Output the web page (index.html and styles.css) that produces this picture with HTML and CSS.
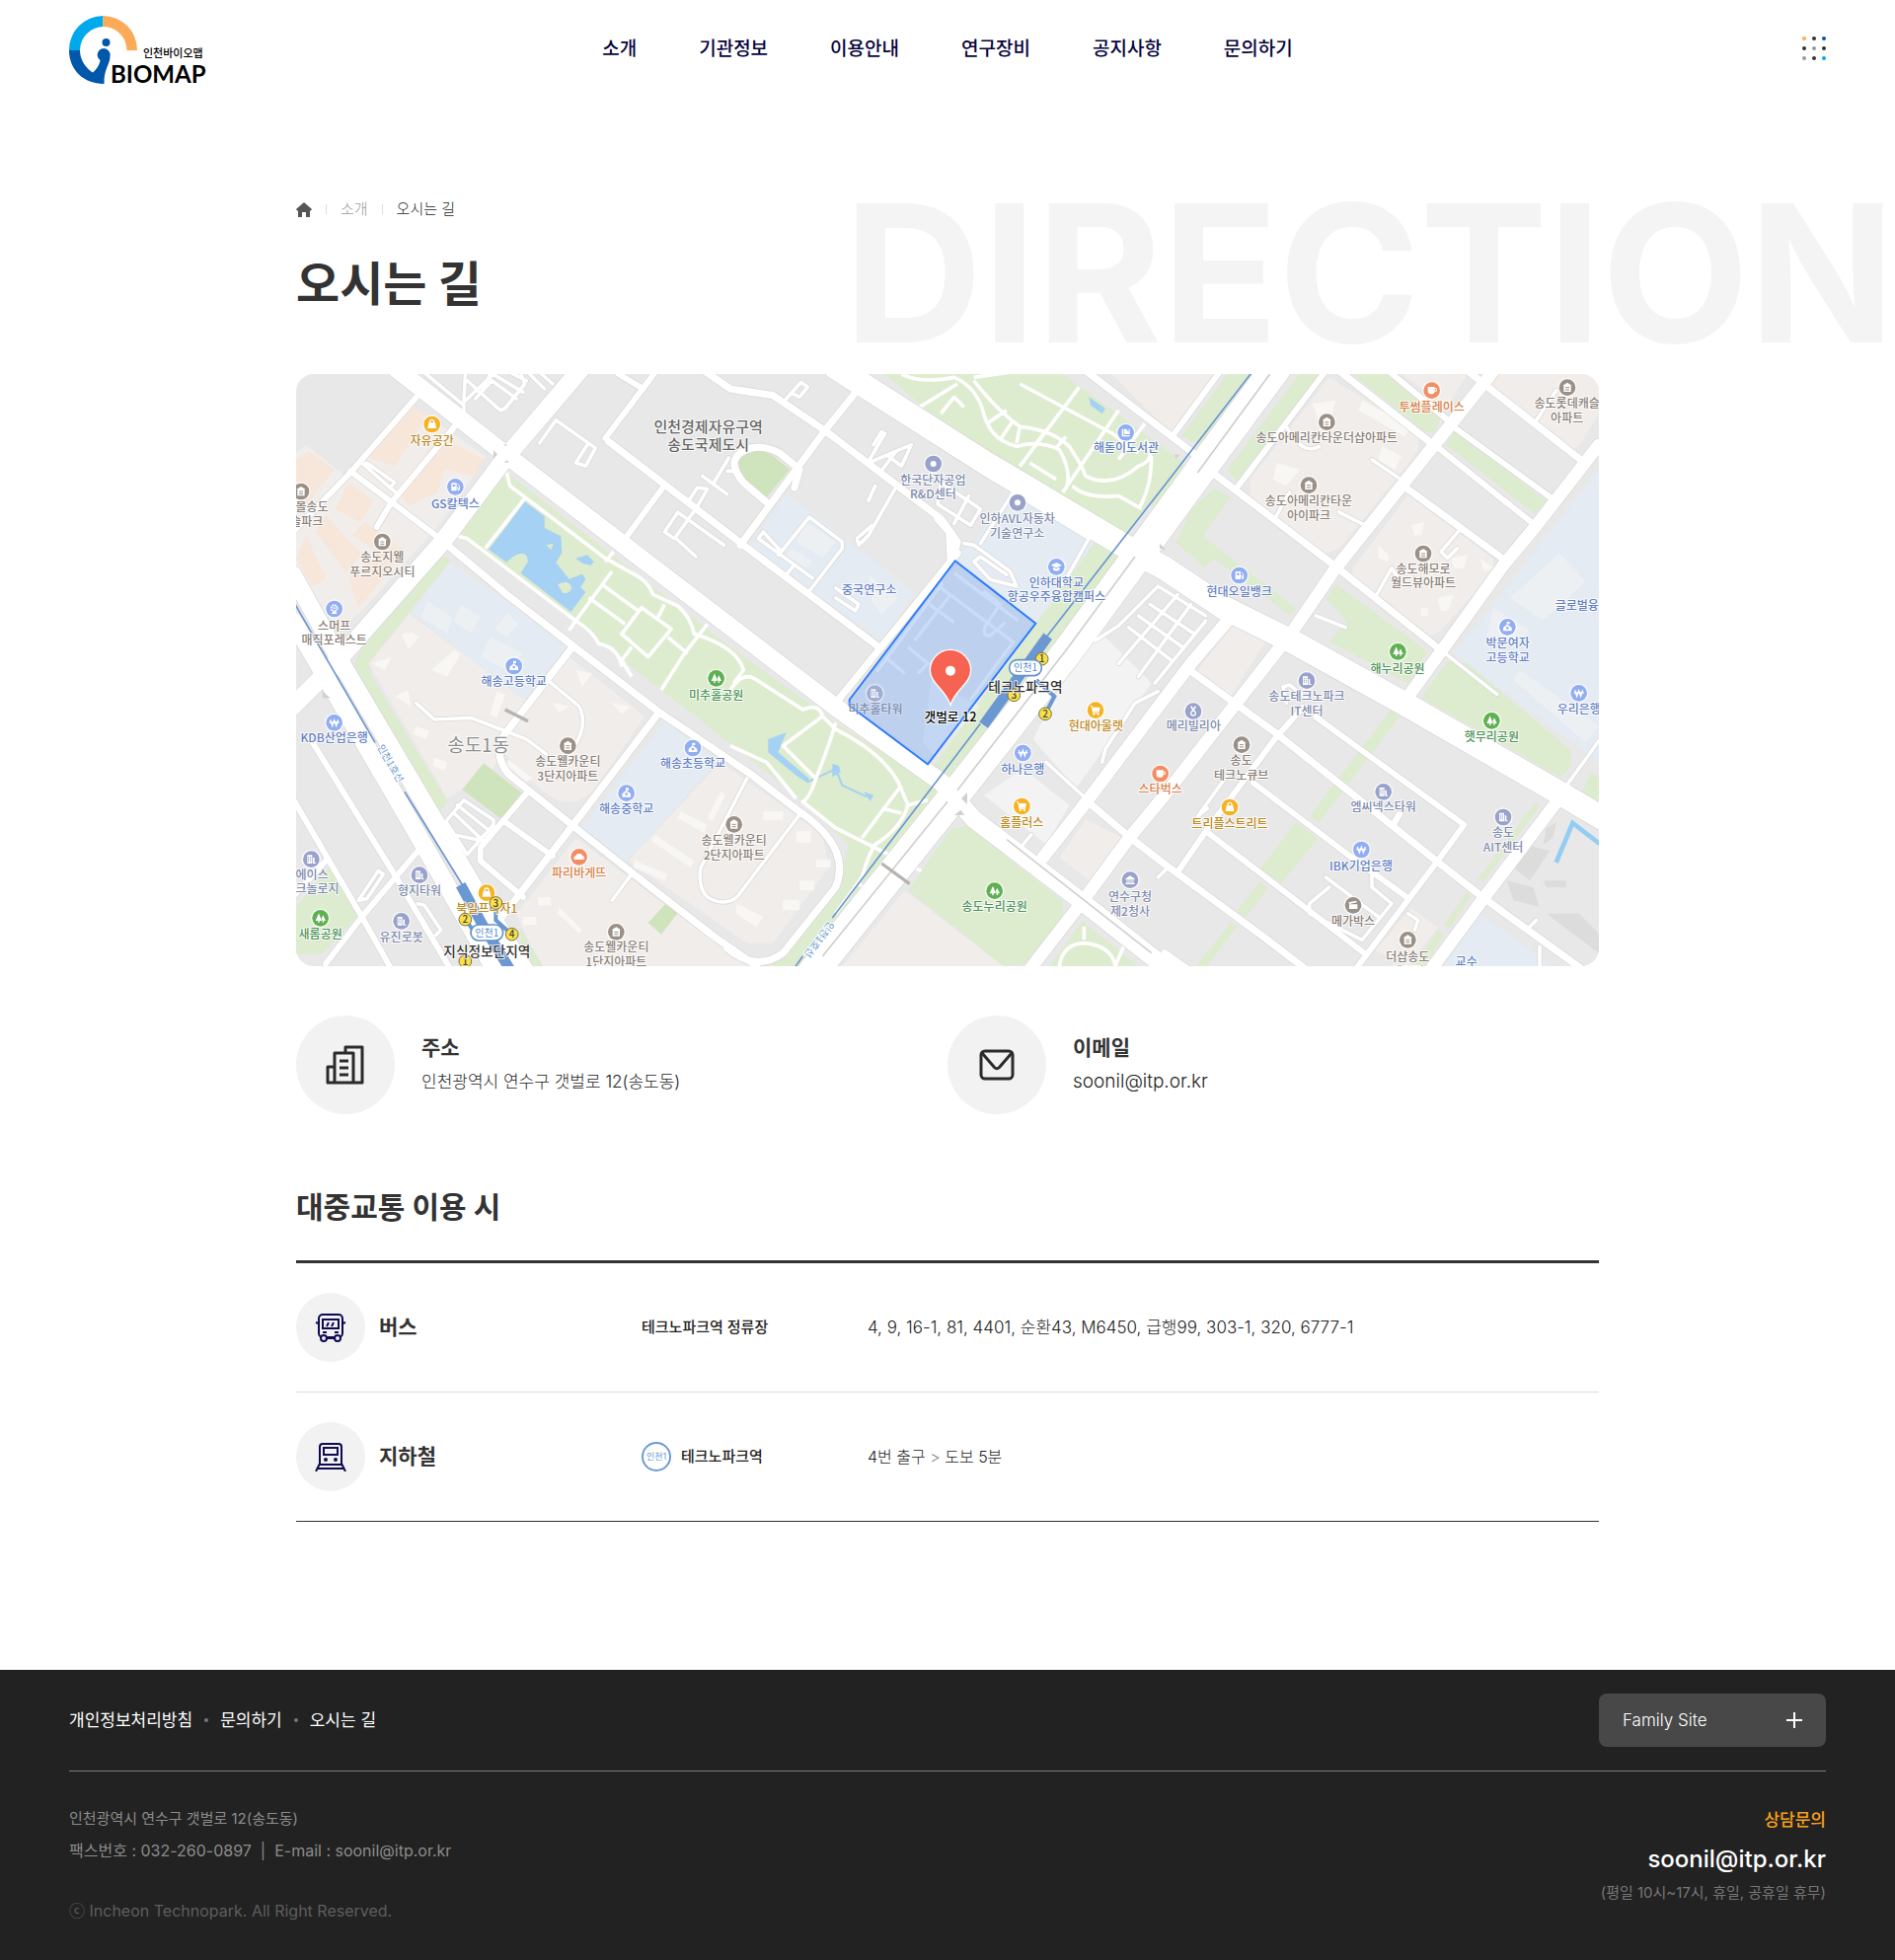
FILE: index.html
```html
<!DOCTYPE html>
<html lang="ko">
<head>
<meta charset="utf-8">
<meta name="viewport" content="width=device-width, initial-scale=1">
<title>오시는 길 | 인천바이오맵</title>
<link rel="stylesheet" href="styles.css">
</head>
<body>
<header class="header">
  <a class="logo" href="#" aria-label="BIOMAP">
    <svg width="148" height="76" viewBox="0 0 148 76">
      <path d="M0 36A34.500 34.500 0 0 1 34.500 1V12A24 24 0 0 0 11 36Z" fill="#00a9eb"/>
      <path d="M34.500 1A34.500 34.500 0 0 1 69 36H58.500A24 24 0 0 0 34.500 12Z" fill="#fbab57"/>
      <path d="M0 36H11C11 46 17 54 24 58.500C27 56 31 51 31.500 46A6.500 6.500 0 1 1 41.500 42C42 49 35 55 35.500 70C15 70 0 56 0 36Z" fill="#0058ab"/>
      <circle cx="37.500" cy="28" r="4" fill="#0058ab"/>
      <text class="logo-ko" x="75" y="43">인천바이오맵</text>
      <text class="logo-en" x="42" y="69">BIOMAP</text>
    </svg>
  </a>
  <nav class="nav" aria-label="주 메뉴">
    <a href="#">소개</a>
    <a href="#">기관정보</a>
    <a href="#">이용안내</a>
    <a href="#">연구장비</a>
    <a href="#">공지사항</a>
    <a href="#">문의하기</a>
  </nav>
  <button class="menu-button" type="button" aria-label="전체 메뉴">
    <svg width="24" height="24" viewBox="0 0 24 24" fill="#333">
      <circle cx="2" cy="2" r="2" fill="#fbab57"/><circle cx="12" cy="2" r="2"/><circle cx="22" cy="2" r="2" fill="#0058ab"/>
      <circle cx="2" cy="12" r="2"/><circle cx="12" cy="12" r="2" fill="#999"/><circle cx="22" cy="12" r="2"/>
      <circle cx="2" cy="22" r="2" fill="#999"/><circle cx="12" cy="22" r="2"/><circle cx="22" cy="22" r="2" fill="#00a9eb"/>
    </svg>
  </button>
</header>

<main class="main">
  <div class="watermark" aria-hidden="true">DIRECTION</div>
  <div class="container">
    <nav class="breadcrumb" aria-label="현재 위치">
      <a href="#" aria-label="홈"><svg width="16" height="15" viewBox="0 0 16 15"><path d="M8 0L16 7L15 8.500H14V15H10V10H6V15H2V8.500H1L0 7Z" fill="#555"/></svg></a>
      <a href="#">소개</a>
      <span class="current" aria-current="page">오시는 길</span>
    </nav>
    <h1 class="title">오시는 길</h1>

    <svg class="map" viewBox="0 0 3960 1800" role="img" aria-label="갯벌로 12 주변 지도">
      <defs>
        <symbol id="m-apt" viewBox="-30 -30 60 60"><circle class="halo" r="29"/><circle r="25" fill="#9b9087"/><path d="M0-15L14-6H11V13H-11V-6H-14Z" fill="#fff"/><path d="M-6 0H6M-6 7H6" stroke="#9b9087" stroke-width="3"/></symbol>
        <symbol id="m-gas" viewBox="-30 -30 60 60"><circle class="halo" r="29"/><circle r="25" fill="#91adf3"/><path d="M-12-12H4V12H-12Z" fill="#fff"/><path d="M4 2H8V10H12V-4L7-9" fill="none" stroke="#fff" stroke-width="3"/><path d="M-8-7H0V-1H-8Z" fill="#91adf3"/></symbol>
        <symbol id="m-ring" viewBox="-30 -30 60 60"><circle class="halo" r="29"/><circle r="25" fill="#98a2ca"/><circle r="9" fill="#fff"/></symbol>
        <symbol id="m-bldg" viewBox="-30 -30 60 60"><circle class="halo" r="29"/><circle r="25" fill="#98a2ca"/><path d="M-12-13H3V13H-12ZM5-5H10V10H14V13H5Z" fill="#fff"/><path d="M-8-8V7M-2-8V7" stroke="#98a2ca" stroke-width="3" stroke-dasharray="4 2"/></symbol>
        <symbol id="m-gov" viewBox="-30 -30 60 60"><circle class="halo" r="29"/><circle r="25" fill="#98a2ca"/><path d="M0-13L14-4V-1H-14V-4ZM-14 9H14V13H-14Z" fill="#fff"/><path d="M-9-1V10M-3-1V10M3-1V10M9-1V10" stroke="#fff" stroke-width="3"/></symbol>
        <symbol id="m-medal" viewBox="-30 -30 60 60"><circle class="halo" r="29"/><circle r="25" fill="#98a2ca"/><circle cy="6" r="7" fill="none" stroke="#fff" stroke-width="4"/><path d="M-7-15L0-3L7-15" fill="none" stroke="#fff" stroke-width="5"/></symbol>
        <symbol id="m-book" viewBox="-30 -30 60 60"><circle class="halo" r="29"/><circle r="25" fill="#91adf3"/><path d="M-12-11H-7V8H12V12H-12ZM-5-11H3V-3L6-6L9-3V-11H12V5H-5Z" fill="#fff"/></symbol>
        <symbol id="m-cap" viewBox="-30 -30 60 60"><circle class="halo" r="29"/><circle r="25" fill="#91adf3"/><path d="M0-13L17-5L0 3L-17-5ZM-10 1L0 6L10 1V9Q0 16-10 9Z" fill="#fff"/></symbol>
        <symbol id="m-school" viewBox="-30 -30 60 60"><circle class="halo" r="29"/><circle r="25" fill="#91adf3"/><path d="M-2-16H7V-9H1V-7L13 2V12H-13V2L-2-7Z" fill="#fff"/><circle cy="3" r="4" fill="#91adf3"/></symbol>
        <symbol id="m-bank" viewBox="-30 -30 60 60"><circle class="halo" r="29"/><circle r="25" fill="#91adf3"/><path d="M-12-9L-6 9L0-8L6 9L12-9M-15-1H15" fill="none" stroke="#fff" stroke-width="4"/></symbol>
        <symbol id="m-wheel" viewBox="-30 -30 60 60"><circle class="halo" r="29"/><circle r="25" fill="#91adf3"/><circle cy="-2" r="9" fill="none" stroke="#fff" stroke-width="6" stroke-dasharray="5 2"/><circle cy="-2" r="3" fill="#fff"/><path d="M-9 15L-4 8H4L9 15Z" fill="#fff"/></symbol>
        <symbol id="m-tree" viewBox="-30 -30 60 60"><circle class="halo" r="29"/><circle r="25" fill="#5fb052"/><path d="M-5-15L4 8H-3V14H-7V8H-15ZM8-9L16 8H10V13H6V8L3 1Z" fill="#fff"/></symbol>
        <symbol id="m-cup" viewBox="-30 -30 60 60"><circle class="halo" r="29"/><circle r="25" fill="#f38e64"/><path d="M-12-11H9V2Q9 11 0 11H-3Q-12 11-12 2Z" fill="#fff"/><path d="M8-6H14V2H8" fill="none" stroke="#fff" stroke-width="3"/></symbol>
        <symbol id="m-bread" viewBox="-30 -30 60 60"><circle class="halo" r="29"/><circle r="25" fill="#f38e64"/><path d="M-15 8Q-18-3-9-4Q-7-12 1-9Q8-13 10-4Q18-4 15 8Z" fill="#fff"/></symbol>
        <symbol id="m-bag" viewBox="-30 -30 60 60"><circle class="halo" r="29"/><circle r="25" fill="#f5b323"/><path d="M-10-5H10L13 12H-13Z" fill="#fff"/><path d="M-6-3V-8A6 6 0 0 1 6-8V-3" fill="none" stroke="#fff" stroke-width="4"/></symbol>
        <symbol id="m-cart" viewBox="-30 -30 60 60"><circle class="halo" r="29"/><circle r="25" fill="#f5b323"/><path d="M-10-9H14L11 5H-8Z" fill="#fff"/><path d="M-16-13H-11L-7 8H11" fill="none" stroke="#fff" stroke-width="3"/><circle cx="-5" cy="12" r="3" fill="#fff"/><circle cx="8" cy="12" r="3" fill="#fff"/></symbol>
        <symbol id="m-film" viewBox="-30 -30 60 60"><circle class="halo" r="29"/><circle r="25" fill="#9b9087"/><path d="M-12-3H13V11H-12ZM-13-9L10-14L11-9L-12-4Z" fill="#fff"/></symbol>

        <g id="roads" class="roads">
          <path class="w14" d="M3860 1253L3960 1115M3500 855L3650 973M3330 1370L3350 1335"/>
          <path class="w14" d="M395 0L510 95V150M510 85L600 0M515 -10L510 80M520 20L620 110L635 105L695 30L680 -10M560 60L595 -10M545 75L595 20L670 75M590 -5L690 55M700 -10L755 45M640 -10L700 20M735 -10L780 30"/>
          <path class="w14" d="M205 275L285 345L300 330L215 270ZM285 345L310 365M740 210L790 140L910 225L880 280L850 270L885 215"/>
          <path class="w14" d="M1235 310L1310 365M1270 330L1315 255M1215 410L1250 350L1220 345L1190 390ZM1215 410L1150 500M1150 500L1120 480L1160 420L1300 520M1155 500L1215 555M1310 295H1340"/>
          <path class="w14" d="M1560 660L1660 530V510L1560 435L1475 540L1420 480L1405 500L1570 620M1475 540L1465 550M1490 610L1510 585M1640 680L1700 720L1710 700L1640 650"/>
          <path class="w14" d="M1740 265L1790 180M1755 215L1780 175M1740 270L1870 215L1840 280L1800 250M1740 385L1760 340M1820 350L1740 490L1710 520L1705 500L1750 460M1490 75L1535 25L1555 40L1530 70L1510 60M1775 300L1820 240"/>
          <path class="w14" d="M1950 395L2050 460L2080 410L1960 330ZM2000 455L2045 370"/>
          <path class="w14" d="M2030 515L2060 520L2170 600L2190 645L2110 625L2060 570L2080 555L2160 610M2080 515L2180 360L2410 500L2330 640"/>
          <path class="w14" d="M2430 810L2500 765L2620 645L2765 735M2530 770L2660 870M2560 735L2695 830M2595 700L2730 790M2500 880L2680 670M2560 920L2720 700M2610 940L2765 750"/>
          <path class="w14" d="M2280 1180L2400 1290M2450 1180L2460 1140L2550 1000L2620 965M2210 1430L2235 1400M2620 1530L2650 1500"/>
          <path class="w14" d="M455 1360L510 1295L600 1355V1370L520 1460ZM480 1335L570 1420M490 1310L590 1390M570 1420L480 1400"/>
          <path class="w14" d="M190 1600L250 1510L265 1520L215 1595ZM370 1610L390 1615L440 1690L425 1705M365 1000L420 1050L530 1045L700 1110L760 1155M770 935L860 1010Q890 1070 840 1140M1370 1230L1230 1500Q1220 1560 1250 1590Q1300 1620 1340 1590L1530 1340M960 1600L1020 1520"/>
          <path class="w14" d="M2770 1320L2740 1345L2830 1220M3140 1560L3080 1610V1640L3240 1720L3330 1610L3270 1560V1500M3130 1530L3290 1650M3340 1370L3360 1335M3010 1000L3000 950L3020 945L3070 985M3100 735L3190 770"/>
          <path class="w14" d="M3010 160Q3060 250 3110 220M2980 430L3020 360M3270 260L3350 315M3170 420L3250 460M3285 670L3330 590L3350 620M3540 470L3480 540L3500 560L3530 530M3770 140L3830 50M3380 1640L3410 1660L3400 1690M3750 1680L3770 1660M3780 1740V1800"/>
          <path class="w20" d="M370 65L165 300L-10 480M490 150L290 390L245 465M165 295L430 495M1115 345L1000 500M980 0L1055 45M940 195L1095 -10M640 1365L780 1465M700 1275L560 1440V1480L690 1590"/>
          <path class="w20" d="M3100 1043L3550 1370L3470 1480L3220 1810M3060 1013L2980 1103L2770 1383L2680 1513M2910 1243L3200 1463L3380 1593M2770 1393L3250 1763M3320 -10L3500 140M3510 155L3810 373M3460 215L3760 455M3130 -10L2860 345M2810 -10L2670 180M90 1793L200 1650L370 1450M-10 1590L90 1480M50 1120L300 1523L470 1810M-10 1290L200 1650L290 1810"/>
          <path class="w24" d="M950 205L1360 520L1775 833M1705 50L1605 175L1350 520M1240 -10L1320 45L1450 65L1605 170L1960 440L2010 510L1995 570M1950 440L1985 480L1990 570"/>
          <path class="w24" d="M460 520L640 670L840 825L1100 1025L1380 1215L1530 1330Q1690 1440 1640 1560L1480 1760Q1400 1820 1310 1745M1100 1033L840 1373L610 1670M840 830L630 1100Q600 1170 650 1220L850 1380L1020 1515L1270 1710L1400 1800"/>
          <path class="w24" d="M1430 390L1360 330Q1310 270 1350 240Q1400 205 1470 240L1530 290L1515 345M2010 545L1770 840L1640 1000M2720 903L2980 1093L3470 1483L3610 1593L3910 1810M2410 1303L2540 1413L2640 1490L2930 1703L3070 1810M2640 1760L2710 1810M3560 -10L3910 265M3170 -10L3450 210M3370 343L3670 563M2790 303L3160 585L3480 840M2400 -10L2740 250"/>
          <path class="w38" d="M3960 215L3770 460L3670 580L3490 830L3380 980M3860 1263L3610 1593L3450 1810M2840 740L2720 880L2400 1303L2270 1470M3640 -10L3510 153L3360 340L3160 590L3030 780L2850 1010L2640 1280L2530 1413L2400 1590L2230 1810"/>
          <path class="w56" d="M300 -20L635 243L1320 768L1640 1013L1960 1240L2060 1353L2400 1613L2650 1810M870 -20L640 250L445 510L110 890L-10 1010M-10 610L150 900L430 1373L560 1593L700 1820M-10 750L90 920L370 1400L610 1820"/>
          <path class="w70" d="M1640 -20L2100 273L2570 553L2640 590L2820 710L3040 820L3370 1003L3840 1273L3970 1350"/>
          <path class="w88" d="M1570 1820L2000 1283L2340 850L2580 523L2780 250L2980 -20"/>
        </g>
      </defs>

      <rect width="3960" height="1800" fill="#e8e8e8"/>

      <g class="estate">
        <path d="M0 240L30 215L150 310L360 100L575 250L480 400L390 510L200 720L130 780L60 690L0 600Z"/>
        <path d="M345 730L700 990L600 1200L460 1290L220 880ZM830 860L1060 1040L900 1270Q830 1340 740 1260L640 1160Q600 1090 700 990Z"/>
        <path d="M1290 1180L1600 1400L1620 1500L1450 1730H1370L1010 1480ZM850 1410L1010 1530L1370 1800H740L670 1640Z"/>
        <path d="M3140 10L3400 170Q3430 210 3390 260L3180 520Q3140 560 3080 530L2900 380V320ZM3380 368L3640 560V600L3480 780Q3440 810 3380 780L3220 640Q3200 610 3220 580Z"/>
        <path d="M3640 0H3960V120L3900 220Q3870 240 3840 210L3620 50ZM2480 0H2800L2660 180ZM3360 0H3560L3500 100Z"/>
        <path d="M2400 1353L2510 1410L2410 1540L2320 1470ZM2860 750L2950 810L2840 980L2740 900ZM3390 1623L3470 1683L3380 1800L3280 1753ZM1850 1570L2150 1800H1660Z"/>
      </g>
      <g fill="#f7e6da">
        <path d="M40 235L115 290L30 400L0 380V260ZM160 330L235 385L195 450L120 410ZM90 430L200 550L150 600L60 480ZM30 490L90 620L50 645L0 560ZM170 490L210 450L330 540L190 710L160 620L200 590L250 540ZM350 100L400 120L300 280L205 250L290 170ZM410 220L480 210L570 260L540 310L450 290L430 360L340 400L310 350L370 280Z"/>
      </g>
      <g class="campus">
        <path d="M470 573L640 690L820 830L690 990L350 725ZM1120 1055L1280 1180L1000 1485L870 1380ZM1490 363L1880 663L1780 813L1380 520ZM2180 345L2440 495L2250 755L2000 560L2060 510Z"/>
        <path d="M3960 290V1180L3520 850ZM3600 1643L3820 1800H3490Z"/>
      </g>
      <g class="green">
        <path d="M430 548L470 565L220 880L230 920L460 1300L425 1343L170 900L200 830Z"/>
        <path d="M640 300L480 485L700 640L1110 960L1380 1170L1540 1300L1680 1430L1650 1560L1440 1800H1530L1960 1260L1640 1060L1320 830Z"/>
        <path d="M2440 495L2510 540L2000 1230L1940 1190ZM1790 0H2330L2700 270L2510 500L2430 430L2000 180Z"/>
        <path d="M2830 0H2900L2750 215L2690 190ZM3050 0H3120L2860 330L2830 290ZM3210 0H3310L3480 130L3460 180L3430 175ZM3520 175L3800 385L3765 425L3495 215Z"/>
        <path d="M2790 348L2840 373L2755 493L3040 713L3020 733L2795 563L2760 588L2675 513L2720 413ZM3160 638L3440 843L3380 940L3140 813L3195 753L3130 683ZM3500 873L3560 880L3870 1140Q3890 1200 3840 1223L3420 983Z"/>
        <path d="M3330 1018L3360 1033L3110 1363L3080 1345ZM3040 1363L3105 1413L2995 1548L2930 1503ZM2930 1543L2955 1563L2885 1653L2860 1633ZM2840 1668L2860 1678L2770 1800H2735ZM3770 1298L3780 1313L3610 1543L3590 1538ZM3560 1573L3570 1588L3510 1683L3490 1673ZM3470 1690L3490 1700L3430 1800H3400ZM3935 1213L3960 1225V1300L3910 1270Z"/>
        <path d="M1990 1383L2040 1373L2330 1603V1650L2230 1790L2150 1800L1860 1570ZM2390 1663L2560 1800H2290ZM0 1620L100 1500L190 1643L80 1763H0ZM680 1680L750 1800H690ZM2660 250L2700 270L2640 420L2600 400Z"/>
      </g>
      <path d="M570 1183L685 1273L625 1353L505 1263ZM1130 1603L1160 1638L1110 1703L1070 1668ZM1430 375L1360 325Q1325 270 1360 245Q1400 222 1450 248L1500 290Z" fill="#cfe3bc"/>
      <g fill="#a5d1f4">
        <path d="M695 388L755 433V468L805 493L808 543L790 573L830 623L870 608L880 623L865 648L880 663L835 723L680 603L700 563L640 573L585 533L640 463Z"/>
        <path d="M850 560L885 550L905 570L895 582L870 575ZM1435 1110L1490 1090L1465 1150L1500 1180L1560 1230L1555 1243L1520 1220L1435 1150ZM1630 1185L1650 1190L1655 1210L1630 1225ZM1725 1270L1755 1280L1745 1298ZM2410 70L2460 105L2450 120L2415 95Z"/>
      </g>
      <path d="M760 520L782 515L775 535ZM640 570Q700 520 705 570L680 610ZM795 640Q830 620 838 650Q830 670 810 665Z" fill="#ddebce"/>
      <path d="M1555 1240L1640 1200L1660 1250L1735 1285" fill="none" stroke="#a5d1f4" stroke-width="6"/>
      <path d="M3800 1380L3830 1365L3820 1410L3790 1430ZM3740 1430L3810 1450L3750 1540L3700 1500ZM3680 1540L3760 1560L3780 1620L3700 1600ZM3790 1540L3860 1540V1560H3800ZM3800 1640L3900 1640L3960 1700V1760L3880 1700Z" fill="#dcdcdc"/>
      <path d="M3830 1485L3880 1365L3965 1430" fill="none" stroke="#94cdf3" stroke-width="14"/>
      <g fill="#f3f3f3">
        <path d="M2420 760L2600 940L2370 1260L2240 1110ZM2210 1200L2350 1310L2280 1430L2090 1280Z"/>
        <path d="M400 690L475 740L460 790L380 740ZM500 700L560 740L530 790L480 750ZM640 725L675 760L640 800L605 775ZM590 800L690 850L640 900L560 860ZM1550 450L1640 510L1600 560L1520 510ZM1510 530L1570 570L1550 590L1490 550ZM1740 610L1830 680L1780 730L1750 690ZM3840 545L3920 630L3790 750L3690 680ZM3640 710L3750 780L3700 830L3620 790ZM3720 900L3960 1070L3920 1120L3700 930Z" opacity=".6"/>
      </g>
      <g class="buildings">
        <path d="M320 790L350 785L375 800L340 835ZM230 880L290 860L270 900ZM480 840L500 850L460 920L410 900ZM300 980L340 960L350 1010ZM610 965L635 975L610 1045L590 1035ZM365 1070L405 1085L395 1110L355 1095ZM420 1165L460 1180L450 1205L415 1190ZM850 900L900 910L870 950ZM780 1000L830 1010L800 1030ZM960 1000L1015 1010L990 1035Z"/>
        <path d="M645 1170L720 1230L700 1240L640 1190ZM1290 1270L1305 1280L1265 1360L1250 1350ZM1170 1330L1250 1370L1240 1395L1160 1350ZM1090 1400L1210 1480L1200 1500L1080 1420ZM1030 1480L1130 1520L1120 1540L1025 1500ZM800 1620L870 1690L860 1700L795 1640ZM735 1590H775V1615H735ZM690 1650H730V1675H690ZM1420 1330H1480V1355H1420ZM1520 1390H1565V1425H1520ZM1580 1475H1625V1500H1580ZM1530 1540H1575V1570H1530ZM1480 1600H1530V1630H1480ZM1340 1610L1420 1650L1400 1680L1335 1640Z"/>
        <path d="M3090 90L3160 80L3150 120L3110 150ZM3240 80L3390 160L3370 190L3230 110ZM2980 270L3050 290L3010 340L2970 320ZM3300 220L3360 250L3340 290L3290 260ZM3390 460L3430 450L3420 490H3400ZM3290 520L3320 550V570L3290 560ZM3510 560L3560 550L3550 590H3520ZM3600 560L3640 590L3610 600ZM3470 680L3520 670L3500 720H3480ZM3420 710L3440 710V735H3420Z"/>
      </g>
      <g class="paths">
        <path d="M640 300L650 340L940 560L1030 610Q1070 630 1085 670L1160 705Q1200 740 1210 790Q1340 830 1360 900L1330 940M480 490L520 500L850 750L830 780M695 378L575 530M850 750L960 600M940 570L965 540M890 680L1000 760M930 640L1040 720M1050 710L1140 775L1070 860L990 790ZM1100 740L1120 700M1020 830L990 870L1020 920M1130 800L1190 850M1250 760L1180 850L1110 960M850 750Q900 780 920 820Q980 830 990 890"/>
        <path d="M1320 960Q1360 900 1400 930L1540 1020Q1590 1000 1600 1040L1640 1080Q1780 1150 1830 1240L1860 1310L1920 1295M1600 1040L1480 1130L1580 1230Q1620 1130 1640 1060M1580 1230Q1560 1290 1540 1300L1640 1380L1720 1420L1760 1440L1900 1510M1840 1250L1720 1410M1860 1310Q1840 1380 1760 1430Q1740 1460 1720 1530L1640 1640M1320 1130L1430 1180L1520 1290M1780 1320L1840 1335M1710 1550L1740 1570"/>
        <path d="M1840 0Q1900 30 2000 10Q2070 40 2090 120Q2110 200 2190 220Q2260 200 2320 230Q2360 300 2340 350M2010 30L1880 110M2060 10L2200 -10M2060 20Q2130 110 2200 160Q2300 170 2350 220Q2390 280 2400 310Q2480 350 2560 280Q2620 260 2580 200M1960 120L2000 70L2030 100M2100 150L2160 110M2140 200L2180 140M2190 210L2200 160M2250 210L2280 170M2310 225L2340 190M2200 30L2480 180L2560 240M2380 40L2200 280M2500 110L2330 360M2360 340Q2400 380 2500 370L2570 410M2230 270L2310 320M2600 250Q2600 350 2560 410M2580 150L2500 260"/>
        <path d="M2395 1680V1720M2320 1800Q2330 1730 2400 1730Q2480 1740 2490 1800M2490 1800L2515 1740"/>
      </g>

      <use class="casing" href="#roads"/>
      <use class="surface" href="#roads"/>
      <path d="M1600 1770L1980 1300M2010 1265L2340 840L2550 555M2740 300L2960 0M2160 1415L2600 1760" fill="none" stroke="#cfcfcf" stroke-width="5"/>
      <path d="M635 1020L705 1055M1780 1488L1865 1550" stroke="#b9b3b0" stroke-width="10"/>
      <path d="M600 232L612 244L600 258ZM630 214H642L636 220ZM632 270L648 268L640 262ZM2625 515L2645 535L2625 530ZM2670 245H2685L2675 258ZM80 965L105 985H80ZM2022 1290L2040 1272V1308ZM2000 1342L2020 1325L2032 1340Z" fill="#d0d0d0"/>

      <g class="metro">
        <path d="M-5 697L240 1120M330 1270L510 1560M2905 -5L2640 338L2280 800M2080 1063L1630 1653M1540 1770L1515 1805"/>
        <path class="platform" d="M500 1553L570 1680L650 1810M2285 797L2090 1067"/>
        <path class="exit" d="M2277 1033L2305 980L2250 930M607 1608V1660L656 1703M514 1658L560 1720"/>
      </g>
      <text class="line-name" transform="translate(246 1134) rotate(60)">인천1호선</text>
      <text class="line-name" transform="translate(1620 1662) rotate(127)">인천1호선</text>

      <path class="site-paths" d="M2000 605L2195 750M1965 635L1765 905M1960 650L2180 815L2050 990M2090 660L2140 700L2095 765Q2085 800 2110 795L2155 755M1990 670L1880 810M1925 700L2000 755M1860 830L1920 880L1890 910M1790 860L1850 910"/>
      <path d="M1930 930L2080 1010L1940 1160L1905 1120Z" fill="#fff" opacity=".35"/>
      <path d="M2003 568L2248 758L1920 1186L1682 1008V990Z" fill="#3c8cff" fill-opacity=".25" stroke="#2f7dfb" stroke-width="6"/>

      <g>
        <use href="#m-bag" x="383" y="123" width="60" height="60"/><use href="#m-gas" x="454" y="313" width="60" height="60"/>
        <use href="#m-apt" x="-15" y="327" width="60" height="60"/><use href="#m-apt" x="232" y="480" width="60" height="60"/>
        <use href="#m-wheel" x="86" y="684" width="60" height="60"/><use href="#m-ring" x="1907" y="243" width="60" height="60"/>
        <use href="#m-ring" x="2163" y="361" width="60" height="60"/><use href="#m-cap" x="2281" y="556" width="60" height="60"/>
        <use href="#m-book" x="2492" y="148" width="60" height="60"/><use href="#m-cup" x="3422" y="20" width="60" height="60"/>
        <use href="#m-apt" x="3103" y="116" width="60" height="60"/><use href="#m-apt" x="3048" y="308" width="60" height="60"/>
        <use href="#m-apt" x="3834" y="11" width="60" height="60"/><use href="#m-apt" x="3396" y="516" width="60" height="60"/>
        <use href="#m-school" x="3652" y="739" width="60" height="60"/><use href="#m-gas" x="2837" y="582" width="60" height="60"/>
        <use href="#m-tree" x="3319" y="814" width="60" height="60"/><use href="#m-school" x="632" y="858" width="60" height="60"/>
        <use href="#m-tree" x="1247" y="895" width="60" height="60"/><use href="#m-bank" x="86" y="1030" width="60" height="60"/>
        <use href="#m-apt" x="796" y="1100" width="60" height="60"/><use href="#m-school" x="1176" y="1107" width="60" height="60"/>
        <use href="#m-school" x="974" y="1244" width="60" height="60"/><use href="#m-apt" x="1301" y="1339" width="60" height="60"/>
        <use href="#m-bread" x="830" y="1438" width="60" height="60"/><use href="#m-bldg" x="16" y="1445" width="60" height="60"/>
        <use href="#m-bldg" x="345" y="1493" width="60" height="60"/><use href="#m-bag" x="549" y="1547" width="60" height="60"/>
        <use href="#m-bldg" x="290" y="1633" width="60" height="60"/><use href="#m-tree" x="44" y="1624" width="60" height="60"/>
        <use href="#m-apt" x="943" y="1666" width="60" height="60"/><use href="#m-bldg" x="1729" y="941" width="60" height="60" opacity=".75"/>
        <use href="#m-cart" x="2400" y="992" width="60" height="60"/><use href="#m-bank" x="2179" y="1122" width="60" height="60"/>
        <use href="#m-cart" x="2176" y="1284" width="60" height="60"/><use href="#m-tree" x="2093" y="1541" width="60" height="60"/>
        <use href="#m-gov" x="2505" y="1508" width="60" height="60"/><use href="#m-cup" x="2597" y="1185" width="60" height="60"/>
        <use href="#m-medal" x="2697" y="995" width="60" height="60"/><use href="#m-bldg" x="3042" y="902" width="60" height="60"/>
        <use href="#m-apt" x="2844" y="1097" width="60" height="60"/><use href="#m-bag" x="2808" y="1287" width="60" height="60"/>
        <use href="#m-bldg" x="3275" y="1240" width="60" height="60"/><use href="#m-bank" x="3208" y="1416" width="60" height="60"/>
        <use href="#m-film" x="3183" y="1585" width="60" height="60"/><use href="#m-apt" x="3349" y="1690" width="60" height="60"/>
        <use href="#m-bldg" x="3639" y="1317" width="60" height="60"/><use href="#m-tree" x="3604" y="1024" width="60" height="60"/>
        <use href="#m-bank" x="3869" y="940" width="60" height="60"/>
      </g>

      <g class="labels">
        <g class="c-shop">
          <text x="413" y="215">자유공간</text><text x="580" y="1639">북일프라자1</text><text x="2431" y="1084">현대아울렛</text>
          <text x="2206" y="1378">홈플러스</text><text x="2838" y="1381">트리플스트리트</text>
        </g>
        <g class="c-food">
          <text x="3452" y="113">투썸플레이스</text><text x="860" y="1529">파리바게뜨</text><text x="2627" y="1276">스타벅스</text>
        </g>
        <g class="c-park">
          <text x="3348" y="908">해누리공원</text><text x="1277" y="989">미추홀공원</text><text x="74" y="1715">새롬공원</text>
          <text x="2123" y="1631">송도누리공원</text><text x="3634" y="1116">햇무리공원</text>
        </g>
        <g class="c-public">
          <text x="484" y="408">GS칼텍스</text><text x="1742" y="670">중국연구소</text>
          <text x="2311" y="647">인하대학교</text><text x="2311" y="691">항공우주융합캠퍼스</text>
          <text x="2523" y="238">해돋이도서관</text><text x="3683" y="831">박문여자</text><text x="3683" y="875">고등학교</text>
          <text x="2867" y="675">현대오일뱅크</text><text x="662" y="949">해송고등학교</text><text x="116" y="1120">KDB산업은행</text>
          <text x="1206" y="1196">해송초등학교</text><text x="1004" y="1336">해송중학교</text><text x="2209" y="1215">하나은행</text>
          <text x="3237" y="1508">IBK기업은행</text><text class="from-start" x="3833" y="1032">우리은행</text><text class="from-start" x="3827" y="717">글로벌융합</text>
          <text x="3557" y="1801">교수</text>
        </g>
        <g class="c-office">
          <text x="1936" y="335">한국단자공업</text><text x="1936" y="379">R&amp;D센터</text>
          <text x="2192" y="454">인하AVL자동차</text><text x="2192" y="498">기술연구소</text>
          <text class="from-end" x="98" y="1535">에이스</text><text class="from-end" x="131" y="1579">크놀로지</text>
          <text x="375" y="1584">형지타워</text><text x="320" y="1726">유진로봇</text><text class="on-site" x="1761" y="1032">미추홀타워</text>
          <text x="2535" y="1602">연수구청</text><text x="2535" y="1646">제2청사</text><text x="2728" y="1084">메리빌리아</text>
          <text x="3072" y="993">송도테크노파크</text><text x="3072" y="1037">IT센터</text><text x="3305" y="1330">엠씨넥스타워</text>
          <text x="3669" y="1408">송도</text><text x="3669" y="1452">AIT센터</text>
        </g>
        <g class="c-home">
          <text class="from-end" x="98" y="418">몰송도</text><text class="from-end" x="82" y="462">솔파크</text>
          <text x="262" y="571">송도지웰</text><text x="262" y="615">푸르지오시티</text>
          <text x="116" y="779">스머프</text><text x="116" y="823">매직포레스트</text>
          <text x="3133" y="206">송도아메리칸타운더샵아파트</text>
          <text x="3078" y="399">송도아메리칸타운</text><text x="3078" y="443">아이파크</text>
          <text x="3863" y="103">송도롯데캐슬</text><text x="3863" y="146">아파트</text>
          <text x="3426" y="605">송도해모로</text><text x="3426" y="649">월드뷰아파트</text>
          <text x="826" y="1191">송도웰카운티</text><text x="826" y="1235">3단지아파트</text>
          <text x="1331" y="1432">송도웰카운티</text><text x="1331" y="1476">2단지아파트</text>
          <text x="973" y="1755">송도웰카운티</text><text x="973" y="1799">1단지아파트</text>
          <text x="2873" y="1188">송도</text><text x="2873" y="1232">테크노큐브</text>
          <text x="3213" y="1678">메가박스</text><text x="3379" y="1785">더샵송도</text><text x="3379" y="1829">센트럴</text>
        </g>
        <text class="district" x="1253" y="176">인천경제자유구역</text><text class="district" x="1253" y="231">송도국제도시</text>
        <text class="dong" x="554" y="1150">송도1동</text>
      </g>

      <g class="exits">
        <circle cx="2267" cy="866" r="19"/><circle cx="2182" cy="976" r="19"/><circle cx="2277" cy="1033" r="19"/>
        <circle cx="607" cy="1608" r="19"/><circle cx="514" cy="1658" r="19"/><circle cx="656" cy="1703" r="19"/><circle cx="514" cy="1785" r="19"/>
        <text x="2267" y="877">1</text><text x="2182" y="987">3</text><text x="2277" y="1044">2</text>
        <text x="607" y="1619">3</text><text x="514" y="1669">2</text><text x="656" y="1714">4</text><text x="514" y="1796">1</text>
      </g>
      <g class="line-badge">
        <rect x="2168" y="869" width="98" height="48" rx="24"/><text x="2217" y="904">인천1</text>
        <rect x="531" y="1674" width="98" height="48" rx="24"/><text x="580" y="1709">인천1</text>
      </g>
      <g class="labels">
        <text class="station" x="2217" y="967">테크노파크역</text>
        <text class="station" x="580" y="1771">지식정보단지역</text>
        <path d="M1989 1006C1975 960 1927 940 1927 900A62 62 0 0 1 2051 900C2051 940 2003 960 1989 1006Z" fill="#f76352" stroke="#fff" stroke-width="4"/>
        <circle cx="1989" cy="902" r="15" fill="#fff"/>
        <text class="place" x="1989" y="1056">갯벌로 12</text>
      </g>
    </svg>

    <div class="contacts">
      <section class="contact">
        <span class="round large"><svg width="40" height="40" viewBox="0 0 40 40" fill="none" stroke="#2b2b2b" stroke-width="3" stroke-linejoin="round"><path d="M9 38V8H28V38M20 8V2H37V38H2V22H9"/><path d="M14 16H23M14 23H23M14 30H23"/></svg></span>
        <div><h2 class="contact-name">주소</h2><p class="contact-text">인천광역시 연수구 갯벌로 12(송도동)</p></div>
      </section>
      <section class="contact">
        <span class="round large"><svg width="36" height="32" viewBox="0 0 36 32" fill="none" stroke="#2b2b2b" stroke-width="3" stroke-linejoin="round"><rect x="2" y="2" width="32" height="28" rx="4"/><path d="M3 4L15.500 18.500Q18 21 20.500 18.500L33 4"/></svg></span>
        <div><h2 class="contact-name">이메일</h2><p class="contact-text email">soonil@itp.or.kr</p></div>
      </section>
    </div>

    <h2 class="subtitle">대중교통 이용 시</h2>
    <table class="transit">
      <tbody>
        <tr>
          <th scope="row"><div class="mode"><span class="round"><svg width="32" height="30" viewBox="0 0 32 30" fill="none" stroke="#0b0b52" stroke-width="2"><rect x="4" y="2" width="24" height="23" rx="4"/><rect x="8" y="7" width="16" height="9"/><path d="M12 14L14 10M17 14L19 10M8 20H12M20 20H24M4 11L1 10M28 11L31 10M12 26H20"/><circle cx="9" cy="26" r="3" fill="#f2f2f2"/><circle cx="23" cy="26" r="3" fill="#f2f2f2"/></svg></span>버스</div></th>
          <td class="stop">테크노파크역 정류장</td>
          <td class="routes">4, 9, 16-1, 81, 4401, 순환43, M6450, 급행99, 303-1, 320, 6777-1</td>
        </tr>
        <tr>
          <th scope="row"><div class="mode"><span class="round"><svg width="32" height="30" viewBox="0 0 32 30" fill="none" stroke="#0b0b52" stroke-width="2"><path d="M1 30L5 22V5Q5 2 8 2H24Q27 2 27 5V22L31 30M5 23H27M3 27H29"/><rect x="9" y="6" width="14" height="7"/><circle cx="11" cy="18" r="1" fill="#0b0b52"/><circle cx="21" cy="18" r="1" fill="#0b0b52"/></svg></span>지하철</div></th>
          <td class="stop"><div class="station-cell"><span class="metro-badge">인천1</span>테크노파크역</div></td>
          <td>4번 출구 <span class="arrow">&gt;</span> 도보 5분</td>
        </tr>
      </tbody>
    </table>
  </div>
</main>

<footer class="footer">
  <div class="footer-top">
    <ul class="footer-links">
      <li><a href="#">개인정보처리방침</a></li>
      <li><a href="#">문의하기</a></li>
      <li><a href="#">오시는 길</a></li>
    </ul>
    <button class="family" type="button">Family Site
      <svg width="16" height="16" viewBox="0 0 16 16"><path d="M8 0V16M0 8H16" stroke="#fff" stroke-width="2"/></svg>
    </button>
  </div>
  <div class="footer-body">
    <div>
      <address class="footer-info">
        <p class="footer-address">인천광역시 연수구 갯벌로 12(송도동)</p>
        <p>팩스번호 : 032-260-0897 &nbsp;|&nbsp; E-mail : soonil@itp.or.kr</p>
      </address>
      <p class="copyright">ⓒ Incheon Technopark. All Right Reserved.</p>
    </div>
    <div class="inquiry">
      <p class="inquiry-title">상담문의</p>
      <p class="inquiry-mail"><a href="#">soonil@itp.or.kr</a></p>
      <p class="inquiry-hours">(평일 10시~17시, 휴일, 공휴일 휴무)</p>
    </div>
  </div>
</footer>
</body>
</html>
```
FILE: styles.css
```css
* { box-sizing: border-box; }
body, h1, h2, p, ul { margin: 0; padding: 0; }
body {
  background: #fff;
  color: #333;
  font-family: Inter, "Noto Sans CJK KR", sans-serif;
  font-size: 16px;
}
a { color: inherit; text-decoration: none; }
button { border: 0; padding: 0; font: inherit; cursor: pointer; }
svg { display: block; }

.header {
  display: grid;
  grid-template-columns: 1fr auto 1fr;
  align-items: center;
  height: 98px;
  padding: 0 70px;
}
.logo { justify-self: start; padding-top: 8px; }
.logo-ko { font: 500 11px "Noto Sans CJK KR", sans-serif; }
.logo-en { font: 700 24px Lato, sans-serif; }
.nav { display: flex; gap: 63px; padding-top: 2px; color: #06043d; font-size: 19px; font-weight: 500; line-height: 28px; }
.menu-button { justify-self: end; background: none; }

.main { position: relative; z-index: 0; padding: 102px 20px 150px; overflow: hidden; }
.watermark {
  position: absolute;
  top: 82px;
  right: 0;
  z-index: -1;
  color: #f4f4f4;
  font-size: 194px;
  font-weight: 700;
  line-height: 194px;
}
.container { max-width: 1320px; margin: 0 auto; }
.breadcrumb { display: flex; align-items: center; height: 24px; color: #999; font-size: 15px; font-weight: 300; line-height: 22px; }
.breadcrumb > * + * { display: flex; align-items: center; }
.breadcrumb > * + *::before { content: ""; width: 1px; height: 10px; margin: 0 14px; background: #ddd; }
.breadcrumb .current { color: #222; }
.title { margin-top: 35px; font-size: 48px; font-weight: 700; line-height: 58px; }

.map { width: 100%; height: auto; margin-top: 62px; border-radius: 18px; font-family: "Noto Sans CJK KR", sans-serif; }
.halo { fill: #fff; opacity: .8; }
.estate { fill: #f1edea; }
.campus { fill: #e4ebf3; }
.green { fill: #ddebce; }
.buildings { fill: #f8f7f4; }
.paths { fill: none; stroke: #fff; stroke-width: 11px; stroke-linejoin: round; }
.site-paths { fill: none; stroke: #fff; stroke-width: 10px; opacity: .7; }
.roads { fill: none; stroke-linecap: round; stroke-linejoin: round; }
.casing { stroke: #d6d6d6; --edge: 4px; }
.surface { stroke: #fff; --edge: 0px; }
.w14 { stroke-width: calc(11px + var(--edge)); }
.w20 { stroke-width: calc(18px + var(--edge)); }
.w24 { stroke-width: calc(22px + var(--edge)); }
.w38 { stroke-width: calc(38px + var(--edge)); }
.w56 { stroke-width: calc(54px + var(--edge)); }
.w70 { stroke-width: calc(72px + var(--edge)); }
.w88 { stroke-width: calc(92px + var(--edge)); }
.metro { fill: none; stroke: #6b97d2; stroke-width: 5px; }
.metro .platform { stroke-width: 32px; }
.metro .exit { stroke-width: 12px; }
.line-name { fill: #6b97d2; stroke: #fff; stroke-width: 6px; paint-order: stroke; font-size: 30px; }
.labels text { font-size: 36px; font-weight: 500; text-anchor: middle; stroke: #fff; stroke-width: 6px; stroke-linejoin: round; stroke-opacity: .85; paint-order: stroke; }
.labels .from-start { text-anchor: start; }
.labels .from-end { text-anchor: end; }
.labels .on-site { stroke-opacity: .3; }
.c-shop { fill: #bd8a1d; }
.c-food { fill: #da7f47; }
.c-park { fill: #4e9457; }
.c-public { fill: #6480c4; }
.c-office { fill: #808bac; }
.c-home { fill: #8b8078; }
.labels .district { fill: #666; font-size: 45px; }
.labels .dong { fill: #8e8e8e; font-size: 57px; font-weight: 400; }
.labels .station { fill: #333; font-size: 41px; }
.labels .place { fill: #000; font-size: 38px; }
.exits circle { fill: #fbe04a; stroke: #77713f; stroke-width: 3px; }
.exits text { fill: #444; font-size: 30px; font-weight: 500; text-anchor: middle; }
.line-badge rect { fill: #fff; stroke: #6093ca; stroke-width: 5px; }
.line-badge text { fill: #5187c5; font-size: 30px; text-anchor: middle; }

.contacts { display: grid; grid-template-columns: 1fr 1fr; margin-top: 50px; }
.contact { display: flex; align-items: center; gap: 27px; }
.round { display: flex; flex: none; align-items: center; justify-content: center; width: 70px; height: 70px; border-radius: 50%; background: #f2f2f2; }
.round.large { width: 100px; height: 100px; }
.contact-name { font-size: 21px; font-weight: 700; line-height: 34px; }
.contact-text { color: #222; font-size: 17px; font-weight: 300; line-height: 34px; }
.contact-text.email { font-size: 19px; }

.subtitle { margin-top: 74px; font-size: 30px; font-weight: 700; line-height: 40px; }
.transit { width: 100%; margin-top: 34px; border-collapse: separate; border-spacing: 0; border-top: 3px solid #333; table-layout: fixed; }
.transit th, .transit td { height: 131px; padding: 0; border-bottom: 1px solid #ddd; text-align: left; font-size: 16px; font-weight: 300; line-height: 26px; }
.transit td { color: #222; }
.transit tr:last-child > * { border-bottom-color: #333; }
.transit th { width: 350px; font-size: 21px; font-weight: 700; }
.transit .stop { width: 229px; font-size: 15px; font-weight: 500; }
.transit .routes { font-size: 17px; }
.mode { display: flex; align-items: center; gap: 14px; }
.station-cell { display: flex; align-items: center; gap: 10px; }
.metro-badge { display: flex; align-items: center; justify-content: center; width: 30px; height: 30px; border: 2px solid #6b9bd8; border-radius: 50%; color: #6b9bd8; font-size: 9px; font-weight: 400; }
.arrow { color: #888; }

.footer { padding: 24px 70px 33px; background: #222; color: #8c8c8c; }
.footer-top { display: flex; align-items: center; justify-content: space-between; padding-bottom: 24px; border-bottom: 1px solid #7d7d7d; }
.footer-links { display: flex; list-style: none; color: #fff; font-size: 17px; line-height: 26px; }
.footer-links li { display: flex; align-items: center; }
.footer-links li + li::before { content: ""; width: 4px; height: 4px; margin: 0 12px; border-radius: 50%; background: #777; }
.family { display: flex; align-items: center; justify-content: space-between; width: 230px; height: 54px; padding: 0 24px; border-radius: 8px; background: #484848; color: #fff; font-size: 17px; font-weight: 300; }
.footer-body { display: flex; justify-content: space-between; padding-top: 31px; }
.footer-info { font-style: normal; line-height: 33px; }
.footer-address { font-size: 15px; }
.copyright { margin-top: 28px; color: #5e5e5e; line-height: 33px; }
.inquiry { text-align: right; }
.inquiry-title { padding-top: 2px; color: #f9a11b; font-size: 17px; font-weight: 500; line-height: 33px; }
.inquiry-mail { color: #fff; font-size: 24px; font-weight: 500; line-height: 46px; }
.inquiry-hours { color: #777; font-size: 15px; line-height: 22px; }
```
